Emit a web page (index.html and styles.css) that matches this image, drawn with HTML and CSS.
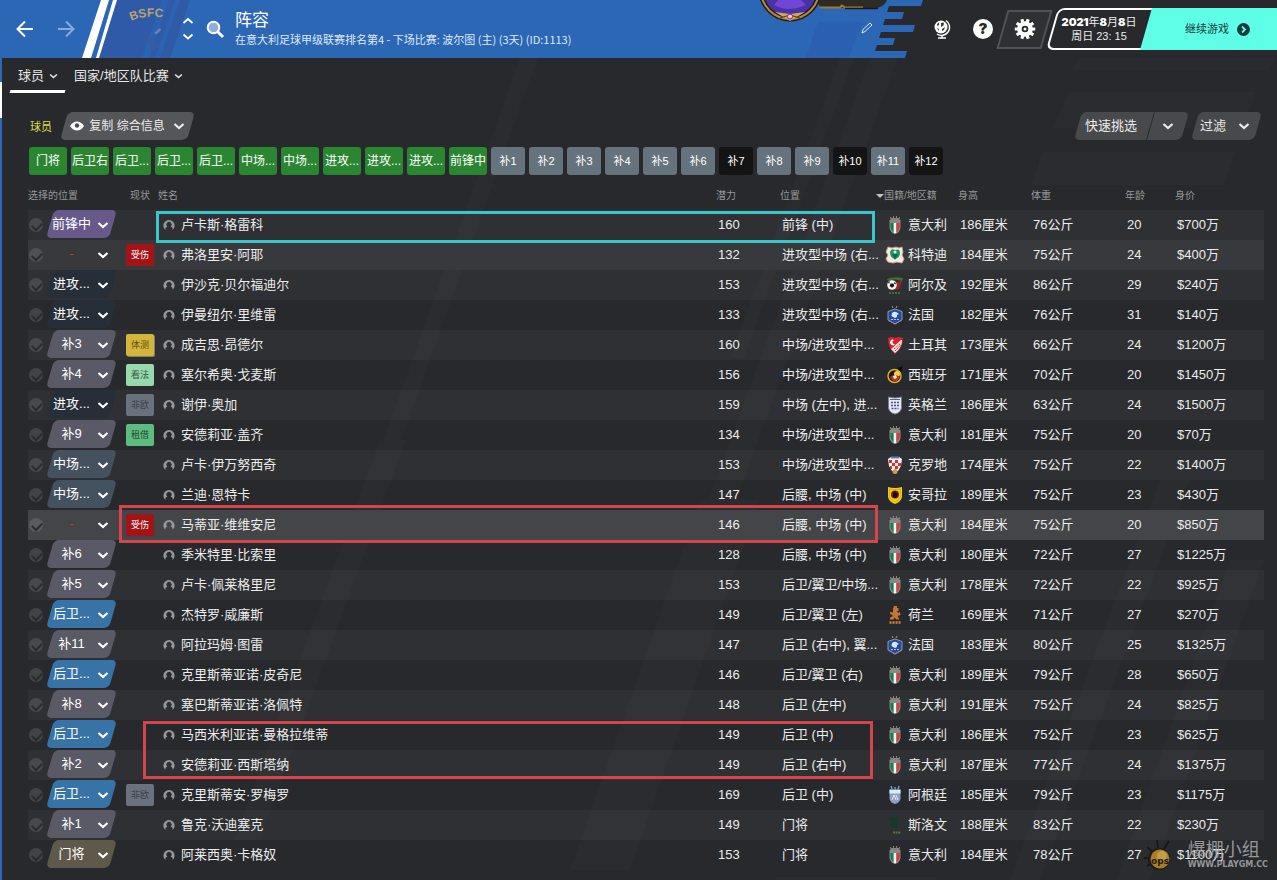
FILE: index.html
```html
<!DOCTYPE html>
<html lang="zh-CN">
<head>
<meta charset="utf-8">
<title>阵容</title>
<link rel="stylesheet" href="styles.css">
</head>
<body>
<svg class="defs" aria-hidden="true">
  <symbol id="chevron" viewBox="0 0 12 8"><path d="M1.500 2 6 6l4.500-4" fill="none" stroke="currentColor" stroke-width="2.200"/></symbol>
  <symbol id="person" viewBox="0 0 12 12"><path d="M2.400 11A5.600 5.600 0 1 1 9.600 11V9.300Q9.200 8 7.600 7.500A2.600 2.600 0 1 0 4.400 7.500Q2.800 8 2.400 9.300Z" fill="#97989b"/></symbol>
  <symbol id="f-ita" viewBox="0 0 20 20"><path d="M5 2h1v1h2V1h1v2h2V1h1v2h2V2h1l-.5 3h-9z" fill="#8a8378"/><path d="M4.500 5h11v8q-1 5-5.500 6-4.500-1-5.500-6z" fill="#85898d"/><path d="M5.500 8h3.200v9.200q-2.700-1.700-3.200-5.200z" fill="#14804d"/><path d="M8.700 8h2.700v9.700l-1.400.7-1.300-.7z" fill="#f4f4f0"/><path d="M11.400 8h3.200v4q-.5 4-3.200 5.500z" fill="#d93a3c"/></symbol>
  <symbol id="f-civ" viewBox="0 0 20 20"><path d="M3 2l4 1 4-1 3 1 3-1 1 5-1 3 2 4-2 4-5-1-4 1-5-1-2-3 2-4-2-3z" fill="#f3efe8" stroke="#d99a86"/><path d="M5 7q1-4 5-2 5-2 5 3 0 5-5 6-5-1-5-7z" fill="#199a63"/><path d="M7 9h6l-3 6z" fill="#0b6f4a"/><circle cx="10" cy="7" r="1.500" fill="#e8f2e9"/></symbol>
  <symbol id="f-alg" viewBox="0 0 20 20"><path d="M2 4q7-3 16-1l-1 3Q9 3 3 6z" fill="#496b32"/><path d="M12 7l5-1q-2 6-3 8l-4 1z" fill="#9b2424"/><circle cx="7" cy="10" r="4.800" fill="#f6f6f2"/><path d="M5.500 8.500h3l.8 2.500-2.300 1.700L4.700 11zM3 7l2-.7L4 9zM10 6.500l1 3-2-1z" fill="#151515"/><path d="M4 18h12" stroke="#52633a" stroke-width="2" stroke-dasharray="2 1"/></symbol>
  <symbol id="f-fra" viewBox="0 0 20 20"><path d="M7 1l1 2M12 1l-1 2" stroke="#a9a17f"/><path d="M3 6.500l7-2.500 7 2.500v8.500l-7 4-7-4z" fill="#1d4e9c" stroke="#a8b2cf" stroke-width=".8"/><path d="M7 8q3-2 5-.5l2 1.500-2 1 0 2-2 1-2-1-1.500-1z" fill="#dce4f3"/><path d="M6 14.500h8" stroke="#b9bfe0" stroke-dasharray="2 1"/><path d="M4 15.500l6 3.500 6-3.500" fill="none" stroke="#b57a98"/></symbol>
  <symbol id="f-tur" viewBox="0 0 20 20"><path d="M3 3q4-2 7 0 4-2 8 0 0 10-8 16Q3 13 3 3z" fill="#d8232f"/><path d="M16 5L6 14l4 4q7-5 7-13z" fill="#f5e5e1"/><path d="M9 5a2.700 2.700 0 1 0 1 4 2 2 0 1 1-1-4z" fill="#fff"/><path d="M9 14l7-6M10 16l6-6" stroke="#d8232f" stroke-dasharray="2 1"/></symbol>
  <symbol id="f-esp" viewBox="0 0 20 20"><circle cx="9.500" cy="11" r="6.500" fill="#19150e" stroke="#d6b51e" stroke-width="1.500"/><circle cx="12" cy="9" r="3" fill="#f0d33c"/><path d="M5 12q4-4 10 0l-3 4H8z" fill="#c62e25"/><path d="M8 11l3-1 1 3-3 1z" fill="#f3efe0"/><path d="M12 3l6-2-2 6z" fill="#0c0c0c"/></symbol>
  <symbol id="f-eng" viewBox="0 0 20 20"><path d="M3.500 2Q10 4 16.500 2v11q-1 5-6.500 6-5.500-1-6.500-6z" fill="#e6e7f2" stroke="#777c98"/><path d="M6 7.500h8M6 10.500h8M6.500 13.500h7" stroke="#4a527f" stroke-width="1.600" stroke-dasharray="2 1"/><path d="M5 4.500h10" stroke="#5c638c"/></symbol>
  <symbol id="f-cro" viewBox="0 0 20 20"><path d="M3 4l3-2h8l3 2-1 7-3 5H7l-3-5z" fill="#f5f1ee"/><path d="M4 5h3v3H4zM10 5h3v3h-3zM7 8h3v3H7zM13 8h3v3h-3zM5 11h2v3H5zM10 11h3v3h-3z" fill="#d3303b"/><path d="M6 2.500h8" stroke="#4a83b5" stroke-width="2"/><circle cx="10" cy="16.500" r="2.500" fill="#c99a5a"/></symbol>
  <symbol id="f-ang" viewBox="0 0 20 20"><path d="M3 2q7 2 14 0v10q-1 5-7 7-6-2-7-7z" fill="#f4cf16"/><path d="M4.500 4q5.500 1 11 0v8q-1 3-5.500 5-4.500-2-5.500-5z" fill="none" stroke="#c59c0f" stroke-width=".6"/><circle cx="10" cy="9.500" r="4" fill="#8a1a15"/><path d="M8 8l2-2 3 3-2 4-3-1z" fill="#160c09"/></symbol>
  <symbol id="f-ned" viewBox="0 0 20 20"><path d="M9 1h3v2h1.500v3H12l1 2 2-1 .5 3-3 1 2 3.500h-3l-2-2-1 2H5v-2l2.500-1V10L5 9V7l3 .5L8 4z" fill="#c77636"/><path d="M4.500 17.500h12" stroke="#d8843c" stroke-width="2.500" stroke-dasharray="2 1"/></symbol>
  <symbol id="f-arg" viewBox="0 0 20 20"><path d="M6 1l1 3M14 1l-1 3M10 2v2" stroke="#5aa0d6" stroke-width="1.500"/><path d="M4.500 5h11v9q-1 4-5.500 5-4.500-1-5.500-5z" fill="#8d9fc2"/><path d="M4.500 4.500h11v4h-11z" fill="#d9edf6"/><path d="M7 15l2-5 2 5M11 10l2 5" stroke="#e9e9ff" fill="none"/></symbol>
  <symbol id="f-svn" viewBox="0 0 20 20"><path d="M5 2h9l-2 8 2 4-7-2z" fill="#17382f"/><path d="M8 17.500h8" stroke="#53743b" stroke-width="2" stroke-dasharray="2 .6"/></symbol>
</svg>
<div class="app">
  <svg class="backdrop" viewBox="0 0 1277 880" preserveAspectRatio="none" aria-hidden="true">
    <path d="M1080 58h197l-9 12H1070zM1068 92h188l-13 36h-190zM1042 152h193l-11 33h-192zM840 58h14l-110 300h-14zM870 58h28L700 600h-28zM520 58h18L380 500h-18zM380 440h26L260 840h-26zM700 500h60L630 870h-60zM1160 480h30L1040 880h-30zM1230 560h34L1150 880h-34zM776 877h160v3H774z"/>
  </svg>
  <header class="topbar">
    <div class="brandbar">
      <button class="icon-btn" aria-label="后退"><svg width="18" height="18" viewBox="0 0 18 18"><path d="M17 9H2M9 1.500 1.500 9 9 16.500" fill="none" stroke="currentColor" stroke-width="2"/></svg></button>
      <button class="icon-btn faded" aria-label="前进"><svg width="18" height="18" viewBox="0 0 18 18"><path d="M1 9h15M9 1.500 16.500 9 9 16.500" fill="none" stroke="currentColor" stroke-width="2"/></svg></button>
      <svg class="club" width="108" height="58" viewBox="0 0 108 58" role="img" aria-label="BSFC">
        <path d="M35 0H108L88 58H17z" fill="#2f5aa8"/>
        <path d="M80 0h7L67 58h-7zM93 0h5L78 58h-5z" fill="#2b63b2"/>
        <path d="M19 0h8L9 58H0zM31 0h4L17 58h-3z" fill="#fff"/>
        <path id="arc" d="M49 21Q64 14 84 18" fill="none"/>
        <text class="club-name"><textPath href="#arc">BSFC</textPath></text>
        <path d="M72 33l6-5 1 2-4 4z" fill="#7684ad"/><path d="M66 37l7 2 3 9-6 3z" fill="#375aa2"/>
      </svg>
      <button class="icon-btn stepper" aria-label="切换"><svg width="12" height="24" viewBox="0 0 12 24"><path d="M1.500 6 6 2l4.500 4M1.500 17.500l4.500 4 4.500-4" fill="none" stroke="currentColor" stroke-width="1.800"/></svg></button>
      <button class="icon-btn search" aria-label="搜索"><svg width="19" height="19" viewBox="0 0 19 19"><circle cx="7.500" cy="7.500" r="5.800" fill="#8fafd8" stroke="#fff" stroke-width="2"/><path d="m11.500 11.500 5.500 5.500" stroke="#fff" stroke-width="3"/></svg></button>
      <div class="heading">
        <h1>阵容</h1>
        <p>在意大利足球甲级联赛排名第4 - 下场比赛: 波尔图 (主) (3天) (ID:1113)</p>
      </div>
    </div>
    <div class="tail">
      <svg width="175" height="58" viewBox="0 0 175 58" aria-hidden="true">
        <path d="M0 0h173l-2 6H139l-2 6h17l-2 7h-17l-2 6h32l-2 7h-32l-2 6h16l-2 7h-16l-2 6h32l-2 7H0z" fill="#2c67b5"/>
        <path d="M68 22h45L98 58H56z" fill="#2b5faf"/>
        <path d="M66 0h71q-2 6-10 8H71z" fill="#2c2b25"/><path d="M70 7.500h20l2-2 3 2h18" fill="none" stroke="#a6792f" stroke-width="2"/>
        <path d="M95 8.500h33" stroke="#1b1a17" stroke-width="1.500"/>
        <circle cx="40" cy="-10" r="29" fill="#4931a8" stroke="#241a17" stroke-width="5"/>
        <circle cx="40" cy="-10" r="29" fill="none" stroke="#b28a3c" stroke-width="2"/>
        <path d="M24 5q14 8 32 0L51 0H28z" fill="#7047d2"/>
        <path d="M25 12l15 2 15-2-10 6-5 3-5-3z" fill="#d3a36a"/><path d="M30 18l10-3 10 3" fill="none" stroke="#5b3320"/><circle cx="40" cy="16.500" r="2.500" fill="#f3c3d8" stroke="#8e3262"/>
      </svg>
      <button class="edit" aria-label="编辑"><svg width="12" height="12" viewBox="0 0 12 12"><path d="M1 11l1-3.500 7-6.500 2 2-7 6.500z" fill="none" stroke="#dce8f8"/></svg></button>
    </div>
    <div class="tools">
      <button class="icon-btn" aria-label="世界"><svg width="18" height="20" viewBox="0 0 18 20"><circle cx="8" cy="8" r="6.500" fill="#fff"/><path d="M4 5l2-1.500V6L4.500 7zM8 4l3-.5-.5 3L8 8zM4 9l2 1-.5 2zM9 10l3-2-1 3-2 1z" fill="#3a3c40"/><path d="M13 1.500a8 8 0 0 1-9 13.500M9 16v3M5 19h8" fill="none" stroke="#fff" stroke-width="1.500"/></svg></button>
      <button class="icon-btn help" aria-label="帮助">?</button>
      <button class="gear" aria-label="设置"><svg width="22" height="22" viewBox="0 0 22 22"><path d="M.8 11h20.400M2.700 5l16.600 12M7.800 1.300l6.400 19.400M14.200 1.300 7.800 20.700M19.300 5 2.700 17" stroke="#fff" stroke-width="3.200"/><circle cx="11" cy="11" r="7.800" fill="#fff"/><circle cx="11" cy="11" r="3.300" fill="#27292c"/><circle cx="11" cy="11" r="1.500" fill="#fff"/></svg></button>
      <div class="clock">
        <div class="date"><time><b>2021</b>年<b>8</b>月<b>8</b>日</time><span>周日 23: 15</span></div>
        <button class="continue">继续游戏<svg width="13" height="13" viewBox="0 0 13 13"><circle cx="6.500" cy="6.500" r="6.500" fill="#163a3b"/><path d="m5 3.500 3 3-3 3" fill="none" stroke="#5fffe7" stroke-width="1.800"/></svg></button>
      </div>
    </div>
  </header>

  <nav class="tabs">
    <a class="tab current" href="#squad">球员<svg width="9" height="6"><use href="#chevron"/></svg></a>
    <a class="tab" href="#national">国家/地区队比赛<svg width="9" height="6"><use href="#chevron"/></svg></a>
  </nav>

  <main id="squad">
    <div class="toolbar">
      <span class="label">球员</span>
      <button class="slant view"><svg width="14" height="10" viewBox="0 0 14 10"><path d="M0 5Q3 .5 7 .5T14 5Q11 9.500 7 9.500T0 5z" fill="#fff"/><circle cx="7" cy="4.500" r="2.200" fill="#4a4b4e"/></svg>复制 综合信息<svg class="chev" width="12" height="8"><use href="#chevron"/></svg></button>
      <div class="split">
        <button class="slant quick">快速挑选</button>
        <button class="slant more" aria-label="更多挑选"><svg width="12" height="8"><use href="#chevron"/></svg></button>
      </div>
      <button class="slant filter">过滤<svg width="12" height="8"><use href="#chevron"/></svg></button>
    </div>
    <div class="chips">
      <button class="chip xi">门将</button><button class="chip xi">后卫右</button><button class="chip xi">后卫...</button><button class="chip xi">后卫...</button><button class="chip xi">后卫...</button><button class="chip xi">中场...</button><button class="chip xi">中场...</button><button class="chip xi">进攻...</button><button class="chip xi">进攻...</button><button class="chip xi">进攻...</button><button class="chip xi">前锋中</button>
      <button class="chip">补1</button><button class="chip">补2</button><button class="chip">补3</button><button class="chip">补4</button><button class="chip">补5</button><button class="chip">补6</button><button class="chip empty">补7</button><button class="chip">补8</button><button class="chip">补9</button><button class="chip empty">补10</button><button class="chip">补11</button><button class="chip empty">补12</button>
    </div>
    <div class="sheet">
      <table>
        <colgroup><col class="c-check"><col class="c-slot"><col class="c-status"><col><col class="c-pot"><col class="c-pos"><col class="c-nat"><col class="c-height"><col class="c-weight"><col class="c-age"><col class="c-value"></colgroup>
        <thead><tr><th colspan="2">选择的位置</th><th class="h-status">现状</th><th>姓名</th><th>潜力</th><th>位置</th><th class="sorted">国籍/地区籍</th><th>身高</th><th>体重</th><th>年龄</th><th>身价</th></tr></thead>
        <tbody id="players"></tbody>
      </table>
      <div class="mark mark-striker"></div>
      <div class="mark mark-midfielder"></div>
      <div class="mark mark-defenders"></div>
    </div>
  </main>
  <div class="watermark">
    <svg width="34" height="36" viewBox="0 0 34 36" aria-hidden="true"><path d="M5 10l6 5M15 3l1 8M27 4l-5 8M2 21l7 0M5 29l5-3" stroke="#111" stroke-width="1.500"/><circle cx="17" cy="22" r="11" fill="#1c1b18"/><circle cx="18" cy="22" r="9.500" fill="#c38d22"/><circle cx="20" cy="19" r="5" fill="#dbb34d"/><text x="9" y="27" class="ops">ops</text></svg>
    <div><strong>爆棚小组</strong><span>WWW.PLAYGM.CC</span></div>
  </div>
</div>
<script src="squad.js"></script>
</body>
</html>
```

FILE: squad.js
```js
// slot, slot kind, status, status kind, name, potential, position, crest, nation, height, weight, age, value
const players = [
  ["前锋中", "striker", "", "", "卢卡斯·格雷科", 160, "前锋 (中)", "ita", "意大利", 186, 76, 20, 700],
  ["-", "none", "受伤", "injured", "弗洛里安·阿耶", 132, "进攻型中场 (右...", "civ", "科特迪", 184, 75, 24, 400],
  ["进攻...", "attack", "", "", "伊沙克·贝尔福迪尔", 153, "进攻型中场 (右...", "alg", "阿尔及", 192, 86, 29, 240],
  ["进攻...", "attack", "", "", "伊曼纽尔·里维雷", 133, "进攻型中场 (右...", "fra", "法国", 182, 76, 31, 140],
  ["补3", "sub", "体测", "fitness", "成吉思·昂德尔", 160, "中场/进攻型中...", "tur", "土耳其", 173, 66, 24, 1200],
  ["补4", "sub", "看法", "view", "塞尔希奥·戈麦斯", 156, "中场/进攻型中...", "esp", "西班牙", 171, 70, 20, 1450],
  ["进攻...", "attack", "非欧", "noneu", "谢伊·奥加", 159, "中场 (左中), 进...", "eng", "英格兰", 186, 63, 24, 1500],
  ["补9", "sub", "租借", "loan", "安德莉亚·盖齐", 134, "中场/进攻型中...", "ita", "意大利", 181, 75, 20, 70],
  ["中场...", "mid", "", "", "卢卡·伊万努西奇", 153, "中场/进攻型中...", "cro", "克罗地", 174, 75, 22, 1400],
  ["中场...", "mid", "", "", "兰迪·恩特卡", 147, "后腰, 中场 (中)", "ang", "安哥拉", 189, 75, 23, 430],
  ["-", "none", "受伤", "injured", "马蒂亚·维维安尼", 146, "后腰, 中场 (中)", "ita", "意大利", 184, 75, 20, 850],
  ["补6", "sub", "", "", "季米特里·比索里", 128, "后腰, 中场 (中)", "ita", "意大利", 180, 72, 27, 1225],
  ["补5", "sub", "", "", "卢卡·佩莱格里尼", 153, "后卫/翼卫/中场...", "ita", "意大利", 178, 72, 22, 925],
  ["后卫...", "back", "", "", "杰特罗·威廉斯", 149, "后卫/翼卫 (左)", "ned", "荷兰", 169, 71, 27, 270],
  ["补11", "sub", "", "", "阿拉玛姆·图雷", 147, "后卫 (右中), 翼...", "fra", "法国", 183, 80, 25, 1325],
  ["后卫...", "back", "", "", "克里斯蒂亚诺·皮奇尼", 146, "后卫/翼卫 (右)", "ita", "意大利", 189, 79, 28, 650],
  ["补8", "sub", "", "", "塞巴斯蒂亚诺·洛佩特", 148, "后卫 (左中)", "ita", "意大利", 191, 75, 24, 825],
  ["后卫...", "back", "", "", "马西米利亚诺·曼格拉维蒂", 149, "后卫 (中)", "ita", "意大利", 186, 75, 23, 625],
  ["补2", "sub", "", "", "安德莉亚·西斯塔纳", 149, "后卫 (右中)", "ita", "意大利", 187, 77, 24, 1375],
  ["后卫...", "back", "非欧", "noneu", "克里斯蒂安·罗梅罗", 169, "后卫 (中)", "arg", "阿根廷", 185, 79, 23, 1175],
  ["补1", "sub", "", "", "鲁克·沃迪塞克", 149, "门将", "svn", "斯洛文", 188, 83, 22, 230],
  ["门将", "keeper", "", "", "阿莱西奥·卡格奴", 153, "门将", "ita", "意大利", 184, 78, 27, 1100],
];

document.getElementById("players").innerHTML = players.map(
  ([slot, kind, status, statusKind, name, pot, pos, crest, nation, cm, kg, age, value]) => `
  <tr class="${kind === "none" ? "unassigned" : ""}">
    <td><input type="checkbox" aria-label="${name}"></td>
    <td><span class="slot ${kind}"><select aria-label="${name} 位置"><option>${slot}</option></select><svg width="12" height="8"><use href="#chevron"/></svg></span></td>
    <td>${status ? `<span class="status ${statusKind}">${status}</span>` : ""}</td>
    <td><span class="with-icon name"><svg width="12" height="12"><use href="#person"/></svg>${name}</span></td>
    <td>${pot}</td>
    <td>${pos}</td>
    <td><span class="with-icon nation"><svg width="20" height="20"><use href="#f-${crest}"/></svg>${nation}</span></td>
    <td>${cm}厘米</td>
    <td>${kg}公斤</td>
    <td>${age}</td>
    <td>$${value}万</td>
  </tr>`).join("");
```

FILE: styles.css
```css
* { box-sizing: border-box; }
body { margin: 0; background: #27292c; color: #ececec; font: 13px/18px "Liberation Sans", "Noto Sans CJK SC", sans-serif; }
button, select, input { font: inherit; color: inherit; margin: 0; padding: 0; border: 0; background: none; }
svg { display: block; flex: none; }
.defs { position: absolute; width: 0; height: 0; }

.app { position: relative; min-height: 100vh; padding-left: 2px; background: linear-gradient(#2c67b5 82px, #fff 82px, #fff 118px, #2c67b5 118px) left / 2px 100% no-repeat; overflow: hidden; }
.backdrop { position: absolute; top: 0; left: 0; width: 100%; height: 100%; fill: #fff; fill-opacity: .016; }
.topbar, .tabs, main { position: relative; }

.topbar { display: flex; height: 58px; }
.brandbar { flex: 1; min-width: 0; display: flex; align-items: center; background: #2c67b5; padding-left: 14px; }
.icon-btn { display: flex; align-items: center; justify-content: center; color: #fff; }
.icon-btn.faded { color: #86aadb; margin-left: 23px; }
.club { margin-left: 7px; }
.club-name { font: bold 12px "Liberation Sans", sans-serif; fill: #b8a274; }
.stepper { margin-left: -8px; }
.search { margin-left: 12px; }
.heading { margin-left: 10px; white-space: nowrap; }
h1 { margin: 0; font-size: 17px; line-height: 20px; font-weight: 400; color: #fff; }
p { margin: 0; font: 11px/16px "Noto Sans CJK SC", sans-serif; color: #dfe9f7; }
.tail { position: relative; }
.edit { position: absolute; left: 111px; top: 22px; }
.tools { display: flex; align-items: center; padding-left: 8px; }
.help { width: 20px; height: 20px; margin: 0 9px 0 22px; border-radius: 50%; background: #fff; color: #27292c; font: 900 15px/20px Inter, sans-serif; }
.gear { position: relative; width: 45px; height: 39px; display: grid; place-items: center; z-index: 0; }
.gear::before { content: ""; position: absolute; inset: 0; border: 2px solid #515256; background: #2f3034; transform: skewX(-16deg); z-index: -1; }
.clock { position: relative; display: flex; align-items: center; height: 42px; z-index: 0; overflow: hidden; padding-left: 8px; margin-left: -3px; }
.date { position: relative; width: 94px; height: 42px; display: flex; flex-direction: column; align-items: center; justify-content: center; font-size: 11px; line-height: 14px; z-index: 0; }
.date::before { content: ""; position: absolute; inset: 0 -20px 0 0; border: 2px solid #fff; border-radius: 7px; transform: skewX(-16deg); background: #27292c; z-index: -1; }
.date b { font: 900 11px/14px Inter, sans-serif; color: #fff; }
.continue { position: relative; width: 131px; height: 42px; display: flex; align-items: center; justify-content: center; gap: 8px; padding-left: 12px; font-size: 11px; color: #163a3b; z-index: 0; }
.continue::before { content: ""; position: absolute; inset: 0 -20px 0 0; background: #5fffe7; transform: skewX(-16deg); z-index: -1; }

.tabs { display: flex; gap: 9px; padding-left: 8px; height: 35px; }
.tab { position: relative; display: flex; align-items: center; gap: 5px; padding: 0 7px 0 8px; color: #e6e6e6; text-decoration: none; }
.tab + .tab { padding-left: 0; }
.tab.current::after { content: ""; position: absolute; inset: auto 0 0; height: 3px; background: #fff; transform: skewX(-16deg); }

main { padding: 19px 13px 0 26px; }
.toolbar { display: flex; align-items: center; padding-right: 2px; }
.label { padding: 2px 8px 0 2px; font-size: 11px; color: #dede4e; }
.slant { position: relative; z-index: 0; height: 28px; display: flex; align-items: center; justify-content: center; }
.slant::before { content: ""; position: absolute; inset: 0 4px; border-radius: 5px; background: #48494c; transform: skewX(-16deg); z-index: -1; }
.view { width: 135px; gap: 5px; font-size: 12px; }
.view::before { background: #55565a; }
.view .chev { margin-left: 3px; }
.split { display: flex; margin-left: auto; }
.quick { width: 80px; padding-right: 6px; }
.quick::before { border-radius: 5px 0 0 5px; }
.more { width: 42px; margin-left: -7px; }
.more::before { border-radius: 0 5px 5px 0; }
.filter { width: 71px; gap: 12px; margin-left: 2px; padding-right: 3px; }

.chips { display: flex; gap: 4px; padding: 7px 0 0 1px; }
.chip { width: 34px; height: 28px; border-radius: 3px; background: #65747c; font-size: 11px; line-height: 28px; color: #fff; white-space: nowrap; text-align: center; }
.chip.xi { width: 38px; background: #2b8632; font-size: 12px; }
.chip.empty { background: #141415; }

.sheet { position: relative; }
table { width: 100%; table-layout: fixed; border-collapse: collapse; }
.c-check { width: 18px; } .c-slot { width: 78px; } .c-status { width: 34px; }
.c-pot { width: 64px; } .c-pos { width: 104px; } .c-nat { width: 74px; } .c-height { width: 73px; }
.c-weight { width: 94px; } .c-age { width: 50px; } .c-value { width: 89px; }
th { position: relative; height: 35px; padding: 7px 0 0; font-size: 10px; font-weight: 400; text-align: left; color: #96979a; white-space: nowrap; }
th.h-status { padding-left: 6px; }
.sorted::before { content: ""; position: absolute; left: -8px; top: 19px; border: 4px solid transparent; border-top-color: #c4c4c4; border-bottom: 0; }
td { height: 30px; padding: 0 0 0 2px; white-space: nowrap; }
td:nth-child(-n+3) { padding-left: 0; }
tbody tr:nth-child(odd) { background: rgba(255, 255, 255, .035); }
tbody tr.unassigned { background: #38393c; }
tbody tr.unassigned:nth-child(odd) { background: #444548; }
input[type=checkbox] { appearance: none; display: block; position: relative; width: 14px; height: 14px; margin-left: 1px; border-radius: 50%; background: rgba(255, 255, 255, .12); }
input[type=checkbox]::after { content: ""; position: absolute; left: 3px; top: 4px; width: 8px; height: 5px; border: solid #2b2c2f; border-width: 0 0 2px 2px; transform: rotate(-45deg); }
.slot { position: relative; z-index: 0; display: flex; align-items: center; width: 71px; height: 28px; margin-bottom: 2px; }
.slot::before { content: ""; position: absolute; inset: 0 4px; border-radius: 5px; transform: skewX(-16deg); z-index: -1; }
.slot select { appearance: none; width: 100%; height: 28px; padding: 0 20px 1px 0; text-align: center; text-align-last: center; overflow: visible; color: #fff; }
.slot svg { position: absolute; right: 8px; top: 11px; color: #fff; pointer-events: none; }
.striker::before { background: #675a8b; }
.sub::before { background: #595a66; }
.attack::before { background: #262f38; }
.mid::before { background: #44515e; }
.back::before { background: #3873a8; }
.keeper::before { background: #5f594b; }
.none select { color: #c23a3a; }
.status { display: block; width: 28px; height: 22px; margin-left: 2px; border-radius: 2px; font-size: 9px; line-height: 22px; text-align: center; }
.injured { background: #a41316; color: #fff; }
.fitness { background: #d3b63c; color: #5c4b14; box-shadow: 1px 1px 0 #85805f; }
.status.view { width: 28px; background: #97d8ac; color: #315a40; }
.noneu { background: #6a727d; color: #3b424c; }
.loan { background: #5ebc80; color: #1d4c30; }
.with-icon { display: flex; align-items: center; }
.name { gap: 6px; padding-left: 3px; }
.nation { gap: 3px; margin-left: -1px; }

.mark { position: absolute; border: 3px solid #d4464a; pointer-events: none; }
.mark-striker { top: 36px; left: 128px; right: 389px; height: 32px; border-color: #3bc6cb; }
.mark-midfielder { top: 330px; left: 91px; right: 386px; height: 38px; }
.mark-defenders { top: 546px; left: 115px; right: 391px; height: 58px; }

.watermark { position: absolute; right: 9px; bottom: 7px; display: flex; align-items: center; gap: 12px; color: #a9aaac; opacity: .85; pointer-events: none; }
.watermark strong { display: block; font-size: 18px; line-height: 20px; font-weight: 400; }
.watermark span { display: block; font: bold 8px/10px "DejaVu Sans", sans-serif; }
.ops { font: bold 9px "DejaVu Sans", sans-serif; fill: #1d1a12; }
```
